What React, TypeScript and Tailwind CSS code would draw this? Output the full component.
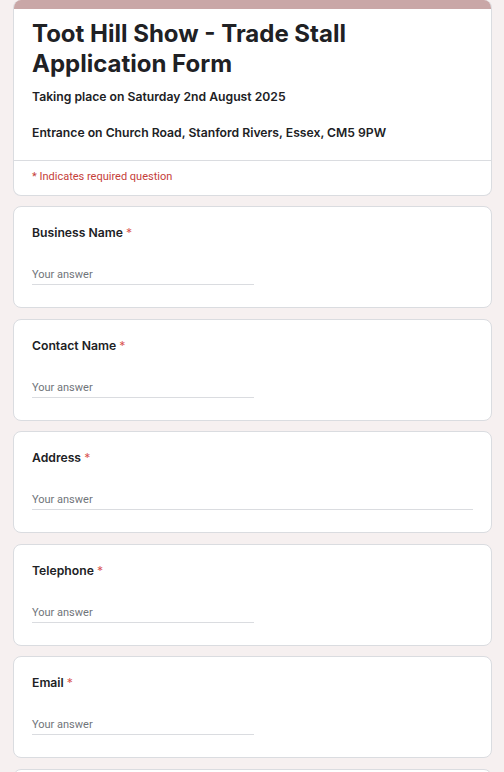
import React from "react";

const questions = [
  { label: "Business Name", long: false },
  { label: "Contact Name", long: false },
  { label: "Address", long: true },
  { label: "Telephone", long: false },
  { label: "Email", long: false },
];

const Question = ({ label, long }: { label: string; long: boolean }) => (
  <div className="h-[102px] shrink-0 rounded-lg border border-[#dadce0] bg-white px-[18px] pt-[17px]">
    <div className="text-[12.2px] leading-[18px] font-semibold text-[#202124] [font-family:Inter,sans-serif]">
      {label} <span className="font-normal text-[#d9534f]">*</span>
    </div>
    <div
      className={`mt-[21px] h-[22px] border-b border-[#dadce0] pt-[2px] text-[11px] leading-[20px] text-[#70757a] [font-family:Roboto,sans-serif] ${
        long ? "w-full" : "w-[222px]"
      }`}
    >
      Your answer
    </div>
  </div>
);

export default function App() {
  return (
    <div className="h-[772px] overflow-hidden bg-[#f6f0f0] pl-[13px] pr-[12px]">
      <div className="flex flex-col gap-[10.5px]">
        <div className="shrink-0 overflow-hidden rounded-lg border border-[#dadce0] border-t-0 bg-white">
          <div className="h-[9px] bg-[#c9a7a7]" />
          <div className="px-[18px] pt-[10px] pb-[18px] text-[#202124] [font-family:Inter,sans-serif]">
            <h1 className="text-[24px] leading-[30px] font-bold">
              Toot Hill Show - Trade Stall Application Form
            </h1>
            <div className="mt-[9px] text-[12.2px] leading-[18px] font-semibold">
              <p>Taking place on Saturday 2nd August 2025</p>
              <p>&nbsp;</p>
              <p>Entrance on Church Road, Stanford Rivers, Essex, CM5 9PW</p>
            </div>
          </div>
          <div className="border-t border-[#dadce0] px-[18px] pt-[8px] pb-[9.5px] text-[11px] leading-[16px] text-[#c5403a] [font-family:Roboto,sans-serif]">
            * Indicates required question
          </div>
        </div>
        {questions.map((q) => (
          <Question key={q.label} label={q.label} long={q.long} />
        ))}
        <div className="h-[40px] shrink-0 rounded-lg border border-[#dadce0] bg-white" />
      </div>
    </div>
  );
}
